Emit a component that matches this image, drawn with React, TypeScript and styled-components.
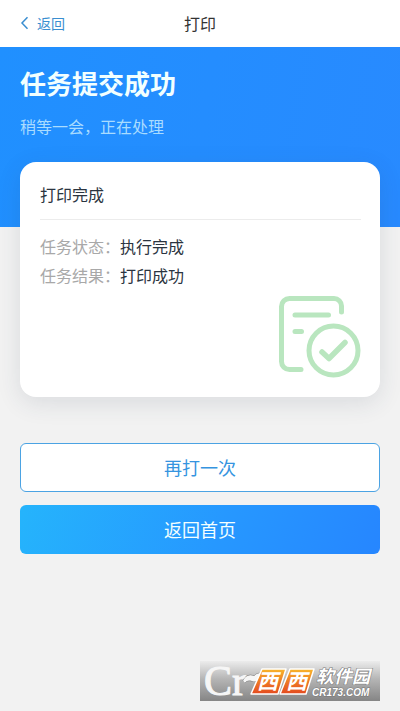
import React from "react";
import styled, { createGlobalStyle } from "styled-components";

const GlobalStyle = createGlobalStyle`
  *, *::before, *::after { box-sizing: border-box; }
  body {
    margin: 0;
    background: #f2f2f2;
    font-family: "Noto Sans CJK SC", "Noto Sans", sans-serif;
    color: #2b3440;
  }
  h1, h2, p, dl, dd { margin: 0; }
`;

const Page = styled.div`
  display: flex;
  flex-direction: column;
  min-height: 100vh;
`;

const TopBar = styled.header`
  display: grid;
  grid-template-columns: 1fr auto 1fr;
  align-items: center;
  height: 47px;
  padding: 0 20px 2px;
  background: #fff;
`;

const BackLink = styled.a`
  display: flex;
  align-items: center;
  gap: 8px;
  color: #3a8ed0;
  font-size: 14px;
  line-height: 20px;
  text-decoration: none;
`;

const BarTitle = styled.h1`
  font-size: 16px;
  line-height: 24px;
  font-weight: 400;
  color: #333;
`;

const Hero = styled.section`
  height: 180px;
  padding: 18px 20px;
  color: #f2ffff;
  background: linear-gradient(100deg, #2090ff, #288aff);
`;

const HeroTitle = styled.h2`
  font-size: 26px;
  line-height: 36px;
  font-weight: 700;
`;

const HeroNote = styled.p`
  margin-top: 13px;
  font-size: 16px;
  line-height: 24px;
  color: #a9dcff;
`;

const Content = styled.main`
  display: flex;
  flex-direction: column;
  margin-top: -65px;
  padding: 0 20px;
`;

const Card = styled.section`
  display: flex;
  flex-direction: column;
  padding: 20px 19px 18px 20px;
  border-radius: 16px;
  background: #fff;
  box-shadow: 0 6px 24px rgba(40, 60, 80, 0.12);
`;

const CardTitle = styled.h2`
  padding-bottom: 13px;
  border-bottom: 1px solid #ececec;
  font-size: 16px;
  line-height: 24px;
  font-weight: 400;
`;

const Details = styled.dl`
  padding-top: 12px;
  font-size: 16px;
  line-height: 29px;
`;

const Detail = styled.div`
  display: flex;
`;

const DetailLabel = styled.dt`
  color: #a8a8a8;
`;

const DoneIcon = styled.svg`
  align-self: flex-end;
  width: 82px;
  height: 83px;
  margin-top: 6px;
`;

const Actions = styled.div`
  display: grid;
  gap: 13px;
  margin-top: 46px;
`;

const ActionButton = styled.button<{ $primary?: boolean }>`
  height: 49px;
  padding: 0 0 2px;
  border: ${(p) => (p.$primary ? "0" : "1px solid #4ba3e3")};
  border-radius: 6px;
  background: ${(p) =>
    p.$primary ? "linear-gradient(110deg, #25b4fc, #2698ff 55%, #2686ff)" : "#fff"};
  color: ${(p) => (p.$primary ? "#f2ffff" : "#3594df")};
  font-family: inherit;
  font-size: 18px;
  line-height: 28px;
  cursor: pointer;
`;

const SiteMark = styled.footer`
  align-self: flex-end;
  width: 180px;
  height: 40px;
  margin: auto 20px 10px;
  background: linear-gradient(#ececec, #b5b5b5 45%, #858585);
`;

const Logo = styled.svg`
  display: block;
  width: 180px;
  height: 40px;
  overflow: visible;
`;

const details = [
  { label: "任务状态：", value: "执行完成" },
  { label: "任务结果：", value: "打印成功" },
];

export default function App() {
  return (
    <>
      <GlobalStyle />
      <Page>
        <TopBar>
          <BackLink href="#back">
            <svg width="9" height="14" viewBox="0 0 9 14" fill="none" stroke="currentColor" strokeWidth="1.5" aria-hidden="true">
              <path d="M7.500 1.200 2 7l5.500 5.800" />
            </svg>
            返回
          </BackLink>
          <BarTitle>打印</BarTitle>
        </TopBar>
        <Hero>
          <HeroTitle>任务提交成功</HeroTitle>
          <HeroNote>稍等一会，正在处理</HeroNote>
        </Hero>
        <Content>
          <Card>
            <CardTitle>打印完成</CardTitle>
            <Details>
              {details.map((d) => (
                <Detail key={d.label}>
                  <DetailLabel>{d.label}</DetailLabel>
                  <dd>{d.value}</dd>
                </Detail>
              ))}
            </Details>
            <DoneIcon viewBox="0 0 82 83" fill="none" stroke="#b9e6bf" strokeWidth="5" strokeLinecap="round" strokeLinejoin="round" aria-hidden="true">
              <path d="M62.500 16V10a7.500 7.500 0 0 0-7.500-7.500H10.500a8 8 0 0 0-8 8V65.500a8 8 0 0 0 8 8H22" />
              <path d="M16 19H49.500M16 35.500H22.500" />
              <circle cx="54.500" cy="54.500" r="24.500" />
              <path d="m43 56 7 6.500L66 46.500" strokeWidth="5.5" />
            </DoneIcon>
          </Card>
          <Actions>
            <ActionButton type="button">再打一次</ActionButton>
            <ActionButton type="button" $primary>返回首页</ActionButton>
          </Actions>
        </Content>
        <SiteMark>
          <Logo viewBox="0 0 180 40" role="img" aria-label="Cr 西西软件园 CR173.COM">
            <defs>
              <linearGradient id="tile" x1="0" y1="0" x2="0" y2="1">
                <stop offset="0" stopColor="#f8b62c" />
                <stop offset="0.5" stopColor="#ee7a25" />
                <stop offset="1" stopColor="#e34a20" />
              </linearGradient>
            </defs>
            <g fill="#f6f6f6" stroke="#777" strokeWidth="1" paintOrder="stroke">
              <text x="4" y="34" fontSize="42" fontFamily="Liberation Serif, serif" stroke="#f6f6f6">
                Cr
              </text>
              <path d="M43 20C45 15 49 13 54 15C57 12 60 12 64 12C62 18 58 22 52 20C48 19 46 20 45 22Z" />
            </g>
            <g fill="url(#tile)" stroke="#fff" strokeWidth="1.5" strokeLinejoin="round">
              <path d="M62 8H86L78 33H51Z" />
              <path d="M90 8H114L106 33H80Z" />
            </g>
            <g fill="#fff" fontFamily="Noto Sans CJK SC, sans-serif" fontWeight="700" fontStyle="italic">
              <text x="57" y="28" fontSize="21">西</text>
              <text x="86" y="28" fontSize="21">西</text>
              <g stroke="#777" strokeWidth="1" paintOrder="stroke">
                <text x="116" y="22" fontSize="18">软件园</text>
                <text x="112" y="35" fontSize="10" fontFamily="Liberation Sans, sans-serif">CR173.COM</text>
              </g>
            </g>
          </Logo>
        </SiteMark>
      </Page>
    </>
  );
}
